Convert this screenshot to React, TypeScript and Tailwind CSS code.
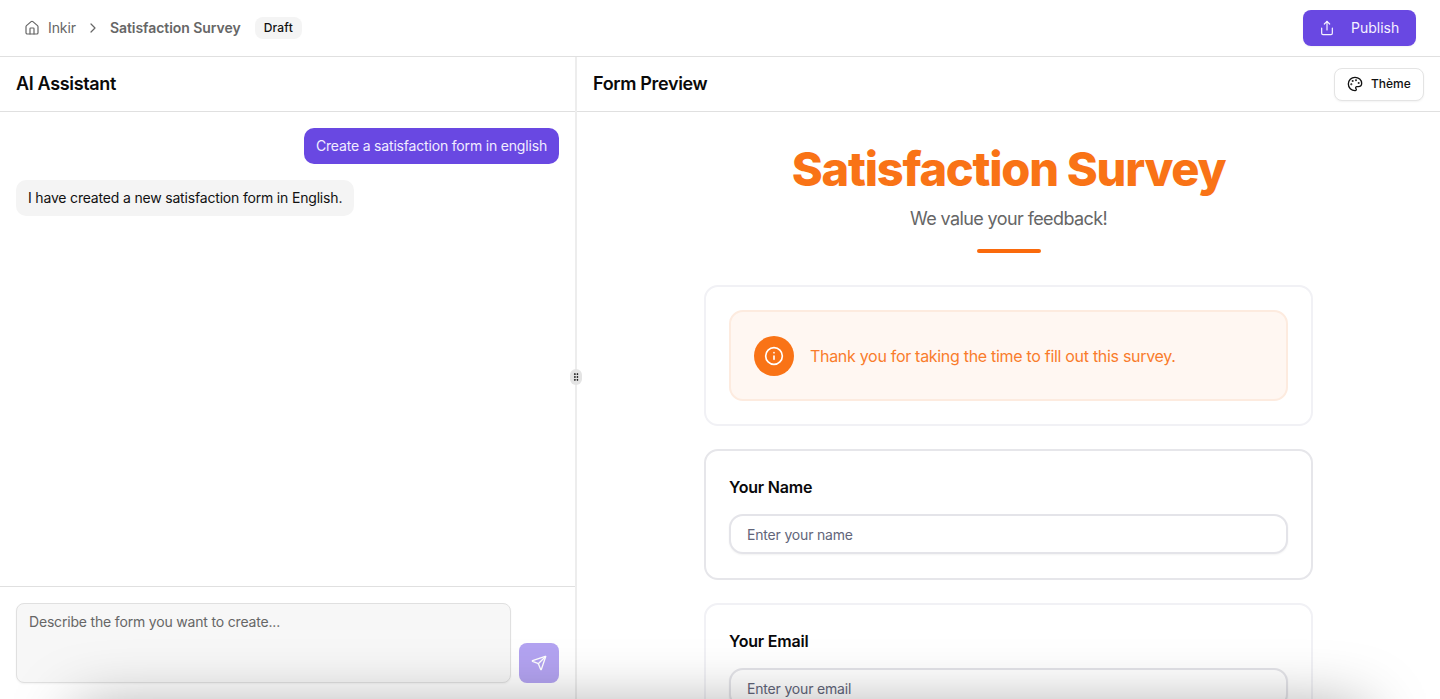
import { ChevronRight, GripVertical, House, Info, Palette, Send, Share } from 'lucide-react';

interface FieldCardProps {
  label: string;
  placeholder: string;
  active?: boolean;
}

const FieldCard = ({ label, placeholder, active = false }: FieldCardProps) => {
  return (
    <div
      className={`h-[131px] shrink-0 rounded-[14px] border-2 px-[23px] pt-[23px] ${
        active ? 'border-[#e6e6ea]' : 'border-[#f1f1f5]'
      }`}
    >
      <label className="block h-[26px] text-base leading-[26px] font-semibold tracking-[-0.2px] text-[#09090b]">
        {label}
      </label>
      <input
        className="mt-[14px] block h-10 w-full rounded-[14px] border-2 border-[#e4e4e9] bg-white px-4 text-sm tracking-[-0.18px] shadow-xs placeholder:text-[#62657a]"
        placeholder={placeholder}
      />
    </div>
  );
};

const TopBar = () => {
  return (
    <header className="flex h-[57px] shrink-0 items-center justify-between border-b border-[#e0e0e0] px-6">
      <nav className="flex items-center text-sm text-[#666]">
        <House className="size-4" strokeWidth={1.8} />
        <span className="ml-2 tracking-[-0.1px]">Inkir</span>
        <ChevronRight className="ml-[9px] size-4" strokeWidth={1.8} />
        <span className="ml-[9px] font-semibold tracking-[-0.05px]">Satisfaction Survey</span>
        <span className="ml-[14px] flex h-[22px] items-center rounded-lg bg-[#f4f4f4] px-[9px] text-xs font-medium tracking-[0.2px] text-[#111]">
          Draft
        </span>
      </nav>
      <button className="flex h-9 w-[113px] items-center rounded-lg bg-[#6948e2] pl-4 text-sm text-[#f5f2ff] shadow-xs">
        <Share className="size-4" strokeWidth={1.8} />
        <span className="ml-4">Publish</span>
      </button>
    </header>
  );
};

const ChatPanel = () => {
  return (
    <section className="flex w-[575px] shrink-0 flex-col">
      <div className="flex h-[55px] shrink-0 items-center border-b border-[#e0e0e0] px-4">
        <h2 className="text-lg font-semibold tracking-[-0.34px] text-[#0a0a0a]">AI Assistant</h2>
      </div>
      <div className="flex flex-1 flex-col gap-4 p-4 text-sm tracking-[-0.18px]">
        <div className="flex h-9 items-center self-end rounded-[10px] bg-[#6948e2] px-3 text-[#f1edff]">
          Create a satisfaction form in english
        </div>
        <div className="flex h-9 items-center self-start rounded-[10px] bg-[#f4f4f4] px-3 text-[#111]">
          I have created a new satisfaction form in English.
        </div>
      </div>
      <div className="flex h-[113px] shrink-0 items-end gap-2 border-t border-[#e0e0e0] px-4 pb-4">
        <textarea
          className="block h-20 flex-1 resize-none rounded-lg border border-[#e0e0e0] bg-[#f7f7f7] px-3 py-2 text-sm tracking-[-0.18px] shadow-xs placeholder:text-[#666]"
          placeholder="Describe the form you want to create..."
        />
        <button className="flex size-10 items-center justify-center rounded-lg bg-[#b3a3f1] text-white">
          <Send className="size-4" strokeWidth={2} />
        </button>
      </div>
    </section>
  );
};

const PreviewPanel = () => {
  return (
    <section className="flex min-w-0 flex-1 flex-col">
      <div className="flex h-[55px] shrink-0 items-center justify-between border-b border-[#e0e0e0] px-4">
        <h2 className="text-lg font-semibold tracking-[-0.34px] text-[#0a0a0a]">Form Preview</h2>
        <button className="flex h-[33px] w-[90px] items-center rounded-lg border border-[#e4e4e4] bg-white pl-3 text-xs font-medium text-[#111] shadow-xs">
          <Palette className="size-4" />
          <span className="ml-2">Thème</span>
        </button>
      </div>
      <div className="flex min-h-0 flex-1 flex-col items-center overflow-hidden pt-[33px]">
        <h1 className="text-[47px] leading-[48px] font-[850] tracking-[-1.25px] text-[#f97316]">
          Satisfaction Survey
        </h1>
        <p className="mt-3 text-lg leading-7 tracking-[-0.6px] text-[#666]">We value your feedback!</p>
        <div className="mt-4 h-1 w-16 shrink-0 rounded-full bg-[#fa6a0c]" />
        <div className="mt-8 flex w-[609px] flex-col gap-[23px]">
          <div className="h-[141px] shrink-0 rounded-[14px] border-2 border-[#f1f1f5] p-[23px]">
            <div className="flex h-[91px] items-center gap-4 rounded-[14px] border-2 border-[#fdebdf] bg-[#fff7f2] px-[23px]">
              <div className="flex size-10 items-center justify-center rounded-full bg-[#f97316] text-white">
                <Info className="size-5" />
              </div>
              <p className="text-base tracking-[-0.3px] text-[#f97c2c]">
                Thank you for taking the time to fill out this survey.
              </p>
            </div>
          </div>
          <FieldCard label="Your Name" placeholder="Enter your name" active />
          <FieldCard label="Your Email" placeholder="Enter your email" />
        </div>
      </div>
    </section>
  );
};

const App = () => {
  return (
    <div className="relative flex h-[699px] w-[1440px] flex-col overflow-hidden bg-white font-['Inter',sans-serif]">
      <TopBar />
      <div className="flex min-h-0 flex-1">
        <ChatPanel />
        <div className="relative w-0.5 shrink-0 bg-[#ededed]">
          <div className="absolute top-[312px] left-1/2 flex h-4 w-3 -translate-x-1/2 items-center justify-center rounded-full bg-[#e4e4e4] text-black">
            <GripVertical className="size-2.5 shrink-0" />
          </div>
        </div>
        <PreviewPanel />
      </div>
      <div className="pointer-events-none absolute top-[710px] right-[76px] left-[76px] h-20 shadow-[0_0_64px_rgba(0,0,0,0.38)]" />
    </div>
  );
};

export default App;
